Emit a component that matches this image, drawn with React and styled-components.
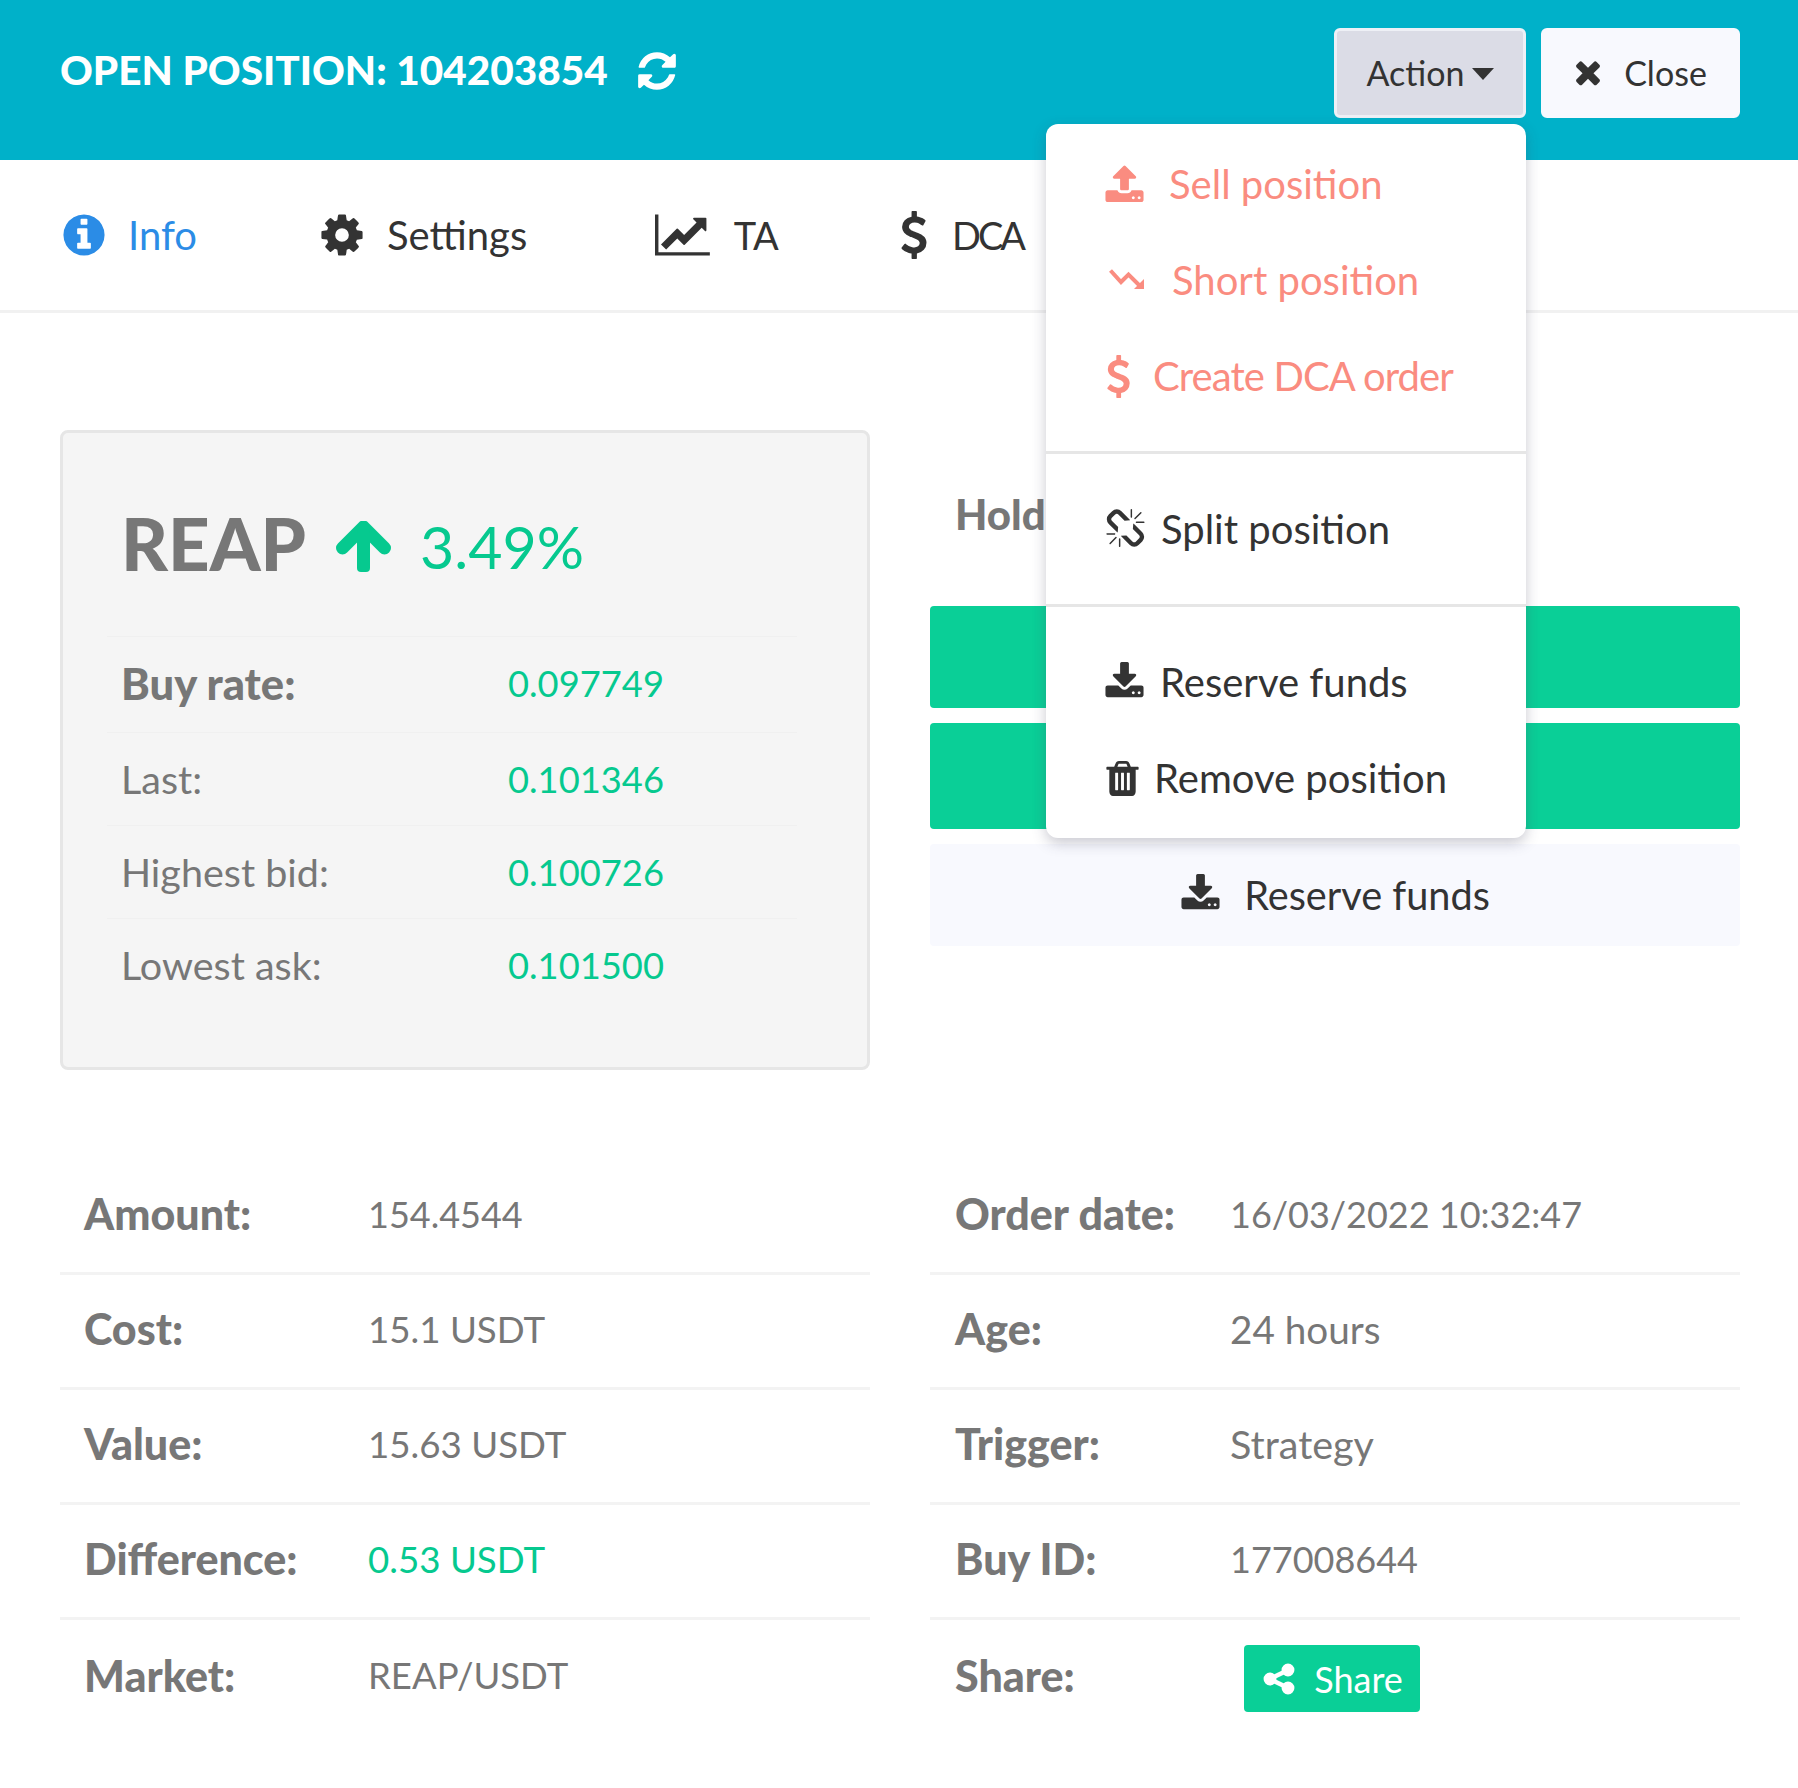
import React from 'react';
import styled, { createGlobalStyle } from 'styled-components';

const GREEN = '#0acf97';
const GREEN_TEXT = '#06c98f';
const SALMON = '#fa8c80';
const DARK = '#333333';
const GREY = '#777777';
const BODY_FONT = '"Lato", "Noto Sans", sans-serif';
const HEAD_FONT = '"Lato", "Inter", sans-serif';

const paths = {
  refresh: 'M1639 1056q0 5-1 7-64 268-268 434.5t-478 166.5q-146 0-282.500-55t-243.500-157l-129 129q-19 19-45 19t-45-19-19-45v-448q0-26 19-45t45-19h448q26 0 45 19t19 45-19 45l-137 137q71 66 161 102t187 36q134 0 250-65t186-179q11-17 53-117 8-23 30-23h192q13 0 22.500 9.500t9.500 22.500zm25-800v448q0 26-19 45t-45 19h-448q-26 0-45-19t-19-45 19-45l138-138q-148-137-349-137-134 0-250 65t-186 179q-11 17-53 117-8 23-30 23h-199q-13 0-22.500-9.500t-9.500-22.500v-7q65-268 270-434.500t480-166.500q146 0 284 55.500t245 156.500l130-129q19-19 45-19t45 19 19 45z',
  info: 'M1152 1376v-160q0-14-9-23t-23-9h-96v-512q0-14-9-23t-23-9h-320q-14 0-23 9t-9 23v160q0 14 9 23t23 9h96v320h-96q-14 0-23 9t-9 23v160q0 14 9 23t23 9h448q14 0 23-9t9-23zm-128-896v-160q0-14-9-23t-23-9h-192q-14 0-23 9t-9 23v160q0 14 9 23t23 9h192q14 0 23-9t9-23zm640 416q0 209-103 385.500t-279.500 279.500-385.500 103-385.500-103-279.500-279.500-103-385.500 103-385.500 279.500-279.500 385.500-103 385.500 103 279.500 279.500 103 385.500z',
  cog: 'M1152 896q0-106-75-181t-181-75-181 75-75 181 75 181 181 75 181-75 75-181zm512-109v222q0 12-8 23t-20 13l-185 28q-19 54-39 91 35 50 107 138 10 12 10 25t-9 23q-27 37-99 108t-94 71q-12 0-26-9l-138-108q-44 23-91 38-16 136-29 186-7 28-36 28h-222q-14 0-24.500-8.500t-11.500-21.500l-28-184q-49-16-90-37l-141 107q-10 9-25 9-14 0-25-11-126-114-165-168-7-10-7-23 0-12 8-23 15-21 51-66.500t54-70.500q-27-50-41-99l-183-27q-13-2-21-12.500t-8-23.500v-222q0-12 8-23t19-13l186-28q14-46 39-92-40-57-107-138-10-12-10-24 0-10 9-23 26-36 98.500-107.500t94.500-71.500q13 0 26 10l138 107q44-23 91-38 16-136 29-186 7-28 36-28h222q14 0 24.500 8.500t11.500 21.500l28 184q49 16 90 37l142-107q9-9 24-9 13 0 25 10 129 119 165 170 7 8 7 22 0 12-8 23-15 21-51 66.500t-54 70.500q26 50 41 98l183 28q13 2 21 12.500t8 23.500z',
  chart: 'M2048 1536v128h-2048v-1536h128v1408h1920zm-128-1248v435q0 21-19.500 29.500t-35.500-7.500l-121-121-633 633q-10 10-23 10t-23-10l-233-233-416 416-192-192 585-585q10-10 23-10t23 10l233 233 464-464-121-121q-16-16-7.500-35.500t29.500-19.500h435q14 0 23 9t9 23z',
  usd: 'M1362 1185q0 153-99.500 263.500t-258.500 136.500v175q0 14-9 23t-23 9h-135q-13 0-22.500-9.500t-9.500-22.500v-175q-66-9-127.500-31t-101.500-44.500-74-48-46.500-37.500-17.500-18q-17-21-2-41l103-135q7-10 23-12 15-2 24 9l2 2q113 99 243 125 37 8 74 8 81 0 142.500-43t61.500-122q0-28-15-53t-33.500-42-58.500-37.500-66-32-80-32.500q-39-16-61.500-25t-61.500-26.500-62.500-31-56.500-35.500-53.500-42.500-43.500-49-35.500-58-21-66.500-8.500-78q0-138 98-242t255-134v-180q0-13 9.500-22.500t22.500-9.500h135q14 0 23 9t9 23v176q57 6 110.500 23t87 33.500 63.500 37.500 39 29 15 14q17 18 5 38l-81 146q-8 15-23 16-14 3-27-7-3-3-14.500-12t-39-26.500-58.500-32-74.500-26-85.500-11.500q-95 0-155 43t-60 111q0 26 8.500 48t29.500 41.500 39.500 33 56 31 60.500 27 70 27.500q53 20 81 31.500t76 35 75.500 42.500 62 50 53 63.500 31.500 76.500 13 94z',
  times: 'M1490 1322q0 40-28 68l-136 136q-28 28-68 28t-68-28l-294-294-294 294q-28 28-68 28t-68-28l-136-136q-28-28-28-68t28-68l294-294-294-294q-28-28-28-68t28-68l136-136q28-28 68-28t68 28l294 294 294-294q28-28 68-28t68 28l136 136q28 28 28 68t-28 68l-294 294 294 294q28 28 28 68z',
  upload: 'M1344 1472q0-26-19-45t-45-19-45 19-19 45 19 45 45 19 45-19 19-45zm256 0q0-26-19-45t-45-19-45 19-19 45 19 45 45 19 45-19 19-45zm128-224v320q0 40-28 68t-68 28h-1472q-40 0-68-28t-28-68v-320q0-40 28-68t68-28h427q21 56 70.500 92t110.500 36h256q61 0 110.500-36t70.500-92h427q40 0 68 28t28 68zm-325-648q-17 40-59 40h-256v448q0 26-19 45t-45 19h-256q-26 0-45-19t-19-45v-448h-256q-42 0-59-40-17-39 14-69l448-448q18-19 45-19t45 19l448 448q31 30 14 69z',
  download: 'M1344 1344q0-26-19-45t-45-19-45 19-19 45 19 45 45 19 45-19 19-45zm256 0q0-26-19-45t-45-19-45 19-19 45 19 45 45 19 45-19 19-45zm128-224v320q0 40-28 68t-68 28h-1472q-40 0-68-28t-28-68v-320q0-40 28-68t68-28h465l135 136q58 56 136 56t136-56l136-136h464q40 0 68 28t28 68zm-325-569q17 41-14 70l-448 448q-18 19-45 19t-45-19l-448-448q-31-29-14-70 17-39 59-39h256v-448q0-26 19-45t45-19h256q26 0 45 19t19 45v448h256q42 0 59 39z',
  trash: 'M704 1376v-704q0-14-9-23t-23-9h-64q-14 0-23 9t-9 23v704q0 14 9 23t23 9h64q14 0 23-9t9-23zm256 0v-704q0-14-9-23t-23-9h-64q-14 0-23 9t-9 23v704q0 14 9 23t23 9h64q14 0 23-9t9-23zm256 0v-704q0-14-9-23t-23-9h-64q-14 0-23 9t-9 23v704q0 14 9 23t23 9h64q14 0 23-9t9-23zm-544-992h448l-48-117q-7-9-17-11h-317q-10 2-17 11zm928 32v64q0 14-9 23t-23 9h-96v948q0 83-47 143.500t-113 60.500h-832q-66 0-113-58.500t-47-141.500v-952h-96q-14 0-23-9t-9-23v-64q0-14 9-23t23-9h309l70-167q15-37 54-63t79-26h320q40 0 79 26t54 63l70 167h309q14 0 23 9t9 23z',
  share: 'M1344 1024q133 0 226.500 93.500t93.500 226.500-93.500 226.500-226.500 93.500-226.500-93.500-93.500-226.500q0-12 2-34l-360-180q-92 86-218 86-133 0-226.500-93.500t-93.500-226.500 93.500-226.500 226.500-93.500q126 0 218 86l360-180q-2-22-2-34 0-133 93.500-226.500t226.500-93.500 226.500 93.500 93.500 226.500-93.500 226.500-226.500 93.500q-126 0-218-86l-360 180q2 22 2 34t-2 34l360 180q92-86 218-86z',
  unlink: 'M503 1271l-256 256q-10 9-23 9-12 0-23-9-9-10-9-23t9-23l256-256q10-9 23-9t23 9q9 10 9 23t-9 23zm169 41v320q0 14-9 23t-23 9-23-9-9-23v-320q0-14 9-23t23-9 23 9 9 23zm-224-224q0 14-9 23t-23 9h-320q-14 0-23-9t-9-23 9-23 23-9h320q14 0 23 9t9 23zm1264 128q0 120-85 203l-147 146q-83 83-203 83-121 0-204-85l-334-335q-21-21-42-56l239-18 273 274q27 27 68 27.500t68-26.500l147-146q28-28 28-67 0-40-28-68l-274-275 18-239q35 21 56 42l336 336q84 86 84 204zm-617-724l-239 18-273-274q-28-28-68-28-39 0-68 27l-147 146q-28 28-28 67 0 40 28 68l274 274-18 240q-35-21-56-42l-336-336q-84-86-84-204 0-120 85-203l147-146q83-83 203-83 121 0 204 85l334 335q21 21 42 56zm633 84q0 14-9 23t-23 9h-320q-14 0-23-9t-9-23 9-23 23-9h320q14 0 23 9t9 23zm-544-544v320q0 14-9 23t-23 9-23-9-9-23v-320q0-14 9-23t23-9 23 9 9 23zm407 151l-256 256q-11 9-23 9t-23-9q-9-10-9-23t9-23l256-256q10-9 23-9t23 9q9 10 9 23t-9 23z',
};

const GlobalStyle = createGlobalStyle`
  html, body {
    margin: 0;
    padding: 0;
    background: #ffffff;
  }
  body {
    font-family: ${BODY_FONT};
    color: ${DARK};
  }
`;

const Svg = styled.svg`
  display: block;
  flex: none;
  fill: currentColor;
  width: ${(p) => p.$w}px;
  height: ${(p) => p.$h}px;
  margin-left: ${(p) => p.$ml || 0}px;
`;

const Icon = ({ name, size = 41, ml, wide }) => (
  <Svg viewBox={`0 0 ${wide ? 2048 : 1792} 1792`} $w={wide ? size * 8 / 7 : size} $h={size} $ml={ml}>
    <path d={paths[name]} />
  </Svg>
);

const ShortIcon = () => (
  <Svg viewBox="0 0 36 22" $w={36} $h={22} $ml={3}>
    <polyline points="1.5,1.5 12,13 19.500,5.500 31,17" fill="none" stroke="currentColor" strokeWidth="4" />
    <polygon points="35,10 35,20 25,20" />
  </Svg>
);

const UpArrow = () => (
  <Svg viewBox="0 0 55 51" $w={55} $h={51}>
    <path d="M6.500 27 L27.500 6 L48.500 27" fill="none" stroke="currentColor" strokeWidth="13" strokeLinecap="round" strokeLinejoin="round" />
    <rect x="21" y="8" width="13" height="43" rx="4" />
  </Svg>
);

const Page = styled.div`
  width: 1798px;
  height: 1788px;
  overflow: hidden;
  background: #ffffff;
`;

const Header = styled.header`
  height: 160px;
  box-sizing: border-box;
  background: #00b1c9;
  padding: 28px 58px 0 60px;
  display: flex;
  justify-content: space-between;
  align-items: flex-start;
`;

const TitleRow = styled.div`
  display: flex;
  align-items: center;
  gap: 27px;
  height: 86px;
  color: #ffffff;
`;

const Title = styled.h1`
  margin: 0 0 1px;
  font-family: ${HEAD_FONT};
  font-weight: 900;
  font-size: 40.5px;
  line-height: 1;
  color: #ffffff;
`;

const HeaderActions = styled.div`
  display: flex;
  gap: 15px;
`;

const ActionWrap = styled.div`
  position: relative;
`;

const HeaderButton = styled.button`
  height: 90px;
  box-sizing: border-box;
  display: flex;
  align-items: center;
  justify-content: center;
  margin: 0;
  padding: 0 ${(p) => p.$pr || 0}px 2px 0;
  width: ${(p) => p.$w}px;
  gap: ${(p) => p.$gap}px;
  font-family: ${BODY_FONT};
  font-size: 34px;
  color: ${DARK};
  background: ${(p) => (p.$active ? '#dbdce6' : '#f8f9fe')};
  border: 3px solid ${(p) => (p.$active ? '#eef0f6' : '#f8f9fe')};
  border-radius: 6px;
`;

const Caret = styled.span`
  width: 0;
  height: 0;
  margin-top: 4px;
  border-top: 12px solid ${DARK};
  border-left: 11.500px solid transparent;
  border-right: 11.500px solid transparent;
`;

const Menu = styled.div`
  position: absolute;
  z-index: 5;
  top: 96px;
  right: 0;
  width: 480px;
  box-sizing: border-box;
  padding: 12px 0 12px;
  background: #ffffff;
  border-radius: 12px;
  box-shadow: 0 5px 14px rgba(60, 60, 90, 0.28);
`;

const MenuItem = styled.div`
  height: 96px;
  display: flex;
  align-items: center;
  padding-left: 60px;
  font-size: 40px;
  letter-spacing: ${(p) => p.$spacing || 0}px;
  color: ${(p) => (p.$danger ? SALMON : DARK)};
`;

const MenuIconSlot = styled.span`
  display: flex;
  align-items: center;
  flex: none;
  width: ${(p) => p.$w}px;
`;

const MenuDivider = styled.div`
  height: 3px;
  margin: 27px 0 27px;
  background: #e6e6e6;
`;

const Tabs = styled.nav`
  height: 150px;
  display: flex;
  align-items: center;
  padding-left: 60px;
  border-bottom: 3px solid #f1f1f1;
`;

const Tab = styled.div`
  display: flex;
  align-items: center;
  flex: none;
  width: ${(p) => p.$w}px;
  gap: ${(p) => p.$gap}px;
  font-size: ${(p) => p.$size || 40}px;
  letter-spacing: ${(p) => p.$spacing || 0}px;
  color: ${(p) => (p.$active ? '#2b8ce6' : DARK)};
`;

const Content = styled.main`
  padding: 117px 58px 0 60px;
`;

const TopGrid = styled.div`
  display: grid;
  grid-template-columns: 810px 810px;
  column-gap: 60px;
  align-items: start;
`;

const RateCard = styled.section`
  height: 640px;
  box-sizing: border-box;
  padding: 0 70px 0 44px;
  background: #f5f5f5;
  border: 3px solid #e6e6e6;
  border-radius: 8px;
`;

const CoinTitle = styled.div`
  height: 203px;
  box-sizing: border-box;
  display: flex;
  align-items: center;
  padding: 18px 0 0 14px;
  color: ${GREEN_TEXT};
`;

const CoinName = styled.span`
  font-family: ${HEAD_FONT};
  font-weight: 900;
  font-size: 72.500px;
  line-height: 1;
  color: ${GREY};
  margin-right: 30px;
`;

const CoinChange = styled.div`
  display: flex;
  align-items: center;
  gap: 29px;
  padding-top: 6px;
  font-size: 59px;
  line-height: 1;
`;

const RateRow = styled.div`
  height: ${(p) => p.$h}px;
  box-sizing: border-box;
  display: flex;
  align-items: center;
  padding: ${(p) => (p.$bold ? '0 0 4px 14px' : '0 0 1px 14px')};
  border-top: 1px solid #f0f0f0;
  font-size: 36.300px;
  color: ${GREY};
`;

const RateLabel = styled.span`
  width: 387px;
  flex: none;
  font-family: ${(p) => (p.$bold ? HEAD_FONT : BODY_FONT)};
  font-weight: ${(p) => (p.$bold ? 900 : 400)};
  font-size: ${(p) => (p.$bold ? 43.5 : 39.5)}px;
`;

const GreenText = styled.span`
  color: ${GREEN_TEXT};
`;

const SideColumn = styled.section`
  display: flex;
  flex-direction: column;
`;

const HoldLine = styled.div`
  height: 176px;
  box-sizing: border-box;
  padding: 63px 0 0 25px;
  font-family: ${HEAD_FONT};
  font-weight: 900;
  font-size: 42px;
  line-height: 1;
  color: ${GREY};
`;

const SideButton = styled.button`
  height: ${(p) => p.$h}px;
  display: flex;
  align-items: center;
  justify-content: center;
  gap: 23px;
  margin: 0 0 15px;
  padding: 0 0 2px;
  border: 0;
  border-radius: 4px;
  font-family: ${BODY_FONT};
  font-size: 39.700px;
  color: ${DARK};
  background: ${(p) => (p.$green ? GREEN : '#f8f9fe')};
`;

const DetailGrid = styled.div`
  display: grid;
  grid-template-columns: 810px 810px;
  column-gap: 60px;
  margin-top: 90px;
`;

const DetailRow = styled.div`
  height: 115px;
  box-sizing: border-box;
  display: flex;
  align-items: center;
  padding: 0 0 5px ${(p) => p.$pad}px;
  border-bottom: ${(p) => (p.$last ? '0' : '3px solid #f3f3f3')};
  color: ${GREY};
`;

const DetailLabel = styled.span`
  flex: none;
  width: ${(p) => p.$w}px;
  font-family: ${HEAD_FONT};
  font-weight: 900;
  font-size: 43px;
`;

const DetailValue = styled.span`
  font-size: ${(p) => p.$size || 36}px;
  color: ${(p) => (p.$green ? GREEN_TEXT : GREY)};
`;

const ShareButton = styled.button`
  height: 67px;
  width: 176px;
  margin: 7px 0 0 14px;
  display: flex;
  align-items: center;
  justify-content: center;
  gap: 17px;
  padding: 0;
  border: 0;
  border-radius: 4px;
  background: ${GREEN};
  color: #ffffff;
  font-family: ${BODY_FONT};
  font-size: 36px;
`;

const menuTop = [
  { icon: 'upload', w: 63, label: 'Sell position', ml: -2 },
  { short: true, w: 66, label: 'Short position' },
  { icon: 'usd', w: 47, label: 'Create DCA order', ml: -9, size: 43, spacing: -0.9 },
];

const rates = [
  { label: 'Buy rate:', value: '0.097749', bold: true, h: 96 },
  { label: 'Last:', value: '0.101346', h: 93 },
  { label: 'Highest bid:', value: '0.100726', h: 93 },
  { label: 'Lowest ask:', value: '0.101500', h: 93 },
];

const leftDetails = [
  { label: 'Amount:', value: '154.4544' },
  { label: 'Cost:', value: '15.1 USDT', size: 36.7 },
  { label: 'Value:', value: '15.63 USDT', size: 36.7 },
  { label: 'Difference:', value: '0.53 USDT', size: 36.7, green: true },
  { label: 'Market:', value: 'REAP/USDT', size: 36.5 },
];

const rightDetails = [
  { label: 'Order date:', value: '16/03/2022 10:32:47' },
  { label: 'Age:', value: '24 hours', size: 38.7 },
  { label: 'Trigger:', value: 'Strategy', size: 39.500 },
  { label: 'Buy ID:', value: '177008644' },
];

export default function App() {
  return (
    <Page>
      <GlobalStyle />
      <Header>
        <TitleRow>
          <Title>OPEN POSITION: 104203854</Title>
          <Icon name="refresh" size={44} />
        </TitleRow>
        <HeaderActions>
          <ActionWrap>
            <HeaderButton $active $w={192} $gap={7}>
              Action
              <Caret />
            </HeaderButton>
            <Menu>
              {menuTop.map((item) => (
                <MenuItem $danger $spacing={item.spacing} key={item.label}>
                  <MenuIconSlot $w={item.w}>
                    {item.short ? <ShortIcon /> : <Icon name={item.icon} ml={item.ml} size={item.size} />}
                  </MenuIconSlot>
                  {item.label}
                </MenuItem>
              ))}
              <MenuDivider />
              <MenuItem>
                <MenuIconSlot $w={55}>
                  <Icon name="unlink" ml={-1} />
                </MenuIconSlot>
                Split position
              </MenuItem>
              <MenuDivider />
              <MenuItem>
                <MenuIconSlot $w={54}>
                  <Icon name="download" ml={-2} />
                </MenuIconSlot>
                Reserve funds
              </MenuItem>
              <MenuItem>
                <MenuIconSlot $w={48}>
                  <Icon name="trash" ml={-4} />
                </MenuIconSlot>
                Remove position
              </MenuItem>
            </Menu>
          </ActionWrap>
          <HeaderButton $w={199} $gap={18} $pr={4}>
            <Icon name="times" size={36} />
            Close
          </HeaderButton>
        </HeaderActions>
      </Header>

      <Tabs>
        <Tab $active $w={258} $gap={20}>
          <Icon name="info" size={48} />
          Info
        </Tab>
        <Tab $w={337} $gap={21}>
          <Icon name="cog" size={48} />
          Settings
        </Tab>
        <Tab $w={235} $gap={24} $size={38} $spacing={-0.5}>
          <Icon name="chart" size={48} wide />
          TA
        </Tab>
        <Tab $w={200} $gap={14} $size={38} $spacing={-3}>
          <Icon name="usd" size={48} />
          DCA
        </Tab>
      </Tabs>

      <Content>
        <TopGrid>
          <RateCard>
            <CoinTitle>
              <CoinName>REAP</CoinName>
              <CoinChange>
                <UpArrow />
                3.49%
              </CoinChange>
            </CoinTitle>
            {rates.map((row) => (
              <RateRow key={row.label} $h={row.h} $bold={row.bold}>
                <RateLabel $bold={row.bold}>{row.label}</RateLabel>
                <GreenText>{row.value}</GreenText>
              </RateRow>
            ))}
          </RateCard>
          <SideColumn>
            <HoldLine>Hold</HoldLine>
            <SideButton $green $h={102} />
            <SideButton $green $h={106} />
            <SideButton $h={102}>
              <Icon name="download" />
              Reserve funds
            </SideButton>
          </SideColumn>
        </TopGrid>

        <DetailGrid>
          <div>
            {leftDetails.map((row, i) => (
              <DetailRow key={row.label} $pad={24} $last={i === leftDetails.length - 1}>
                <DetailLabel $w={284}>{row.label}</DetailLabel>
                <DetailValue $size={row.size} $green={row.green}>{row.value}</DetailValue>
              </DetailRow>
            ))}
          </div>
          <div>
            {rightDetails.map((row) => (
              <DetailRow key={row.label} $pad={25}>
                <DetailLabel $w={275}>{row.label}</DetailLabel>
                <DetailValue $size={row.size}>{row.value}</DetailValue>
              </DetailRow>
            ))}
            <DetailRow $pad={25} $last>
              <DetailLabel $w={275}>Share:</DetailLabel>
              <ShareButton>
                <Icon name="share" size={36} />
                Share
              </ShareButton>
            </DetailRow>
          </div>
        </DetailGrid>
      </Content>
    </Page>
  );
}
